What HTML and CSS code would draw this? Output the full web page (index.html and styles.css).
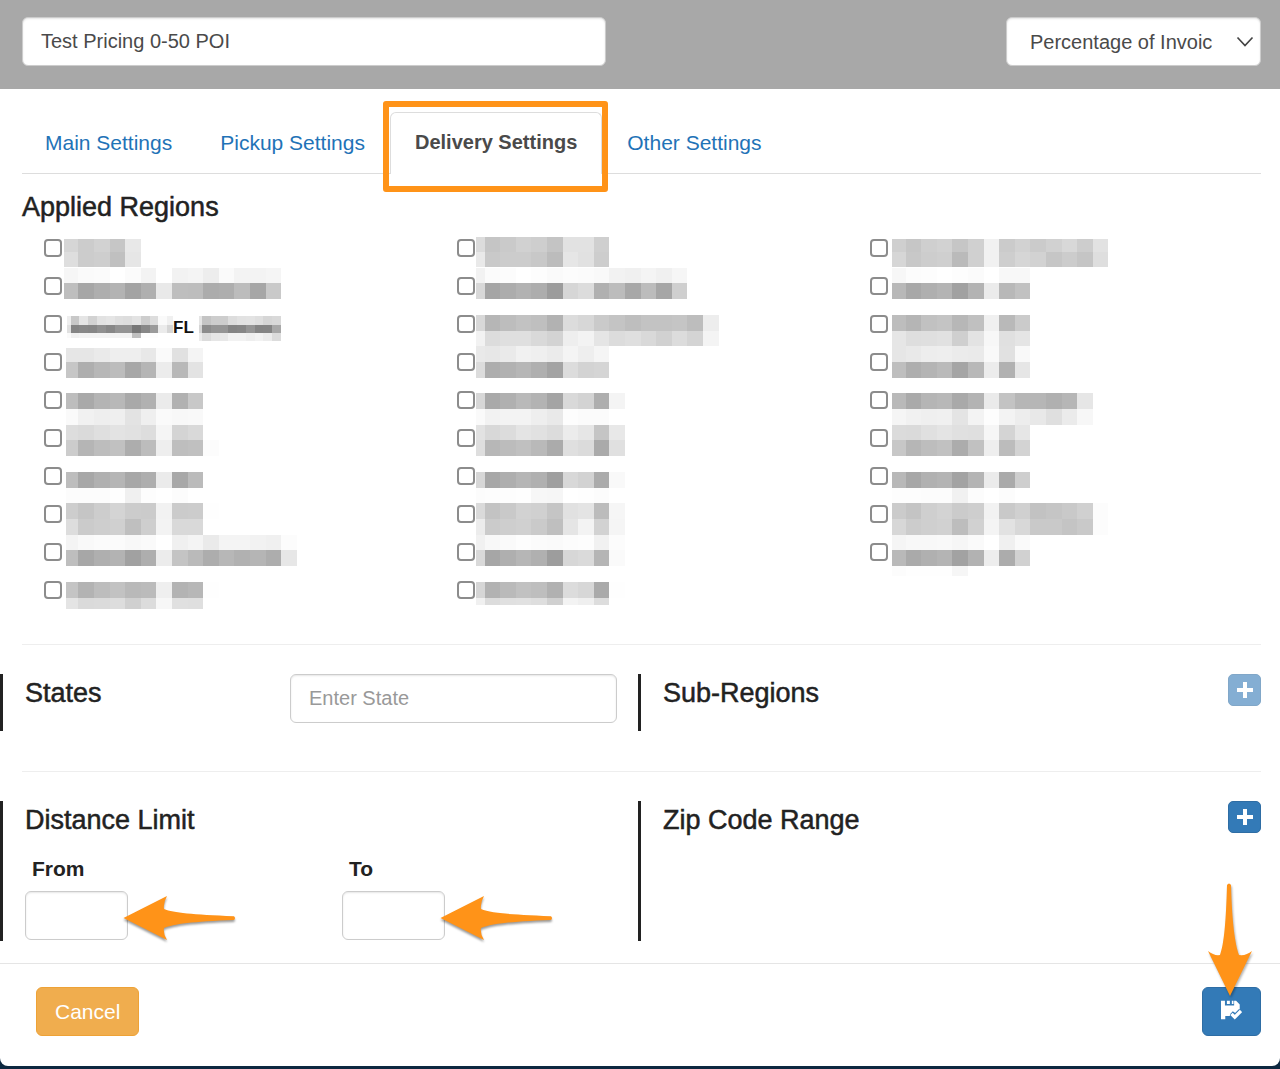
FILE: index.html
```html
<!DOCTYPE html>
<html lang="en">
<head>
<meta charset="utf-8">
<meta name="viewport" content="width=device-width, initial-scale=1">
<title>Pricing - Delivery Settings</title>
<link rel="stylesheet" href="styles.css">
</head>
<body>
<form class="sheet">
  <header class="topbar">
    <input class="field title-field" type="text" value="Test Pricing 0-50 POI" aria-label="Pricing name">
    <div class="select-wrap">
      <select class="field type-select" aria-label="Pricing type">
        <option>Percentage of Invoice</option>
      </select>
      <svg class="chevron" viewBox="0 0 18 12" aria-hidden="true"><path d="M1.5 1.5 9 9.500 16.500 1.500" fill="none" stroke="#444" stroke-width="1.700"/></svg>
    </div>
  </header>

  <nav class="tabs">
    <a class="tab" href="#main">Main Settings</a>
    <a class="tab" href="#pickup">Pickup Settings</a>
    <a class="tab active" href="#delivery" aria-current="page">Delivery Settings</a>
    <a class="tab" href="#other">Other Settings</a>
  </nav>

  <main>
    <section class="regions">
      <h2>Applied Regions</h2>
      <div class="region-columns" id="regions"></div>
    </section>

    <hr>

    <div class="panels">
      <section class="panel states">
        <h2><label for="state">States</label></h2>
        <input class="field" id="state" type="text" placeholder="Enter State">
      </section>
      <section class="panel with-action">
        <h2>Sub-Regions</h2>
        <button class="add" type="button" aria-label="Add sub-region" disabled>
          <svg viewBox="0 0 16 16" aria-hidden="true"><path d="M6 0h4v6h6v4h-6v6H6v-6H0V6h6z" fill="#fff"/></svg>
        </button>
      </section>
    </div>

    <hr class="after-panels">

    <div class="panels limits">
      <section class="panel">
        <h2>Distance Limit</h2>
        <div class="distance">
          <div class="distance-item">
            <label for="from">From</label>
            <div class="pointed">
              <input class="field" id="from" type="text">
              <svg class="arrow-left" viewBox="0 0 116 52" aria-hidden="true"><path d="M1.500 23 45 1Q41 8 42 14C52 18 70 19.500 112 21.200Q114 23 112 25C70 26.500 52 29 42 33Q41 39 45 45Z" fill="#ff9318"/></svg>
            </div>
          </div>
          <div class="distance-item">
            <label for="to">To</label>
            <div class="pointed">
              <input class="field" id="to" type="text">
              <svg class="arrow-left" viewBox="0 0 116 52" aria-hidden="true"><path d="M1.500 23 45 1Q41 8 42 14C52 18 70 19.500 112 21.200Q114 23 112 25C70 26.500 52 29 42 33Q41 39 45 45Z" fill="#ff9318"/></svg>
            </div>
          </div>
        </div>
      </section>
      <section class="panel with-action">
        <h2>Zip Code Range</h2>
        <button class="add" type="button" aria-label="Add zip code range">
          <svg viewBox="0 0 16 16" aria-hidden="true"><path d="M6 0h4v6h6v4h-6v6H6v-6H0V6h6z" fill="#fff"/></svg>
        </button>
      </section>
    </div>
  </main>

  <footer class="actions">
    <button class="cancel" type="button">Cancel</button>
    <div class="save-wrap">
      <button class="save" type="submit" aria-label="Save">
        <svg viewBox="0 0 64 60" aria-hidden="true">
          <path d="M0 2h12v14h28V2h6l11 11v15L44 40l-8-6-8 8v6H13v10H0z" fill="#fff"/>
          <path d="M18 2h9v10h-9zM33 2h5v10h-5z" fill="#fff"/>
          <path d="M32 42 42 52 61 33" fill="none" stroke="#337ab7" stroke-width="17"/>
          <path d="M32 42 42 52 61 33" fill="none" stroke="#fff" stroke-width="10"/>
        </svg>
      </button>
      <svg class="arrow-down" viewBox="0 0 52 118" aria-hidden="true"><path d="M26 114 4 69Q10 74 16 73C20 62 22 40 23 3Q25 0 27 3C28 40 31 62 35 73Q42 74 48 69Z" fill="#ff9318"/></svg>
    </div>
  </footer>
</form>
<script src="script.js"></script>
</body>
</html>
```
FILE: styles.css
```css
* { box-sizing: border-box; }

body {
  margin: 0;
  padding-bottom: 3px;
  background: #0d2840;
  color: #222;
  font: 21px/30px "Liberation Sans", Arial, sans-serif;
}

input, select, button { font: inherit; }

h2 {
  margin: 0;
  font-size: 27px;
  line-height: 30px;
  font-weight: 400;
  -webkit-text-stroke: 0.5px #222;
}

hr {
  margin: 35px 19px 29px 22px;
  border: 0;
  border-top: 1px solid #eee;
}

.after-panels { margin-top: 40px; }

.sheet {
  background: #fff;
  border-radius: 0 0 8px 8px;
}

.field {
  height: 49px;
  padding: 0 18px;
  border: 1px solid #ccc;
  border-radius: 6px;
  background: #fff;
  box-shadow: inset 0 1px 2px rgba(0, 0, 0, 0.1);
  color: #4a4a4a;
  font-size: 20px;
}

.field::placeholder { color: #999; opacity: 1; }

.topbar {
  display: flex;
  justify-content: space-between;
  gap: 22px;
  padding: 17px 19px 23px 22px;
  background: #a8a8a8;
}

.title-field { flex: 0 1 584px; min-width: 0; }

.select-wrap { position: relative; flex: 0 1 255px; }

.type-select {
  display: block;
  width: 100%;
  padding: 0 48px 0 23px;
  appearance: none;
}

.chevron {
  position: absolute;
  top: 19px;
  right: 7px;
  width: 18px;
  height: 12px;
  pointer-events: none;
}

.tabs {
  display: flex;
  gap: 2px;
  margin: 23px 19px 0 22px;
  border-bottom: 1px solid #ddd;
}

.tab {
  height: 61px;
  padding: 15px 22px;
  border: 1px solid transparent;
  border-bottom: 0;
  color: #1f73b7;
  text-decoration: none;
}

.tab.active {
  position: relative;
  height: 62px;
  margin-bottom: -1px;
  padding: 14px 24px;
  border-color: #ddd;
  border-radius: 6px 6px 0 0;
  background: #fff;
  color: #4a4a4a;
  font-size: 20px;
  font-weight: 700;
}

.tab.active::after {
  content: "";
  position: absolute;
  inset: -12px -7px -18px -8px;
  border: 6px solid #ff9318;
  border-radius: 3px;
}

.regions { padding: 18px 19px 0 22px; }

.region-columns {
  display: grid;
  grid-template-columns: repeat(3, 1fr);
  margin-top: 7px;
}

.region-list {
  margin: 0;
  padding: 0 0 0 22px;
  list-style: none;
}

.region {
  display: flex;
  align-items: center;
  gap: 2px;
  height: 38px;
}

.region input {
  flex: none;
  width: 18px;
  height: 18px;
  margin: 0;
  border: 2px solid #8c8c8c;
  border-radius: 4px;
  background: #fff;
  appearance: none;
}

.region input:checked { background: #337ab7; }

.region label {
  display: flex;
  align-items: center;
  height: 38px;
  color: #111;
  font-size: 17px;
  font-weight: 700;
}

.region span { padding-top: 7px; }

.mosaic {
  display: block;
  height: 38px;
  overflow: visible;
  shape-rendering: crispEdges;
}

.mosaic.clipped { overflow: hidden; }

.panels {
  display: grid;
  grid-template-columns: 638fr 642fr;
}

.panel {
  min-height: 57px;
  padding: 0 21px 0 22px;
  border-left: 3px solid #222;
}

.panel > h2 { padding-top: 4px; }

.states {
  display: grid;
  grid-template-columns: 265px 1fr;
  align-items: start;
}

.panel.with-action {
  display: flex;
  align-items: flex-start;
  justify-content: space-between;
  padding-right: 19px;
}

.limits .panel { min-height: 140px; }

.add {
  display: grid;
  place-items: center;
  width: 33px;
  height: 32px;
  padding: 0;
  border: 1px solid #2e6da4;
  border-radius: 5px;
  background: #337ab7;
}

.add:disabled { opacity: 0.6; }

.add svg { width: 16px; height: 16px; }

.distance {
  display: grid;
  grid-template-columns: 317fr 275fr;
  padding-top: 19px;
}

.distance-item label {
  display: block;
  padding: 0 7px 7px;
  font-weight: 700;
}

.pointed { position: relative; width: 103px; }

.pointed .field { display: block; width: 100%; }

.arrow-left {
  position: absolute;
  top: 4px;
  left: 97px;
  width: 116px;
  height: 52px;
  filter: drop-shadow(0 2px 1px rgba(0, 0, 0, 0.4));
  pointer-events: none;
}

.actions {
  display: flex;
  justify-content: space-between;
  margin-top: 22px;
  padding: 23px 19px 30px 36px;
  border-top: 1px solid #e5e5e5;
}

.cancel, .save {
  height: 49px;
  padding: 0 18px;
  border-radius: 6px;
  color: #fff;
}

.cancel { border: 1px solid #eea236; background: #f0ad4e; }

.save {
  display: block;
  padding-bottom: 3px;
  border: 1px solid #2e6da4;
  background: #337ab7;
}

.save svg { display: block; width: 21px; height: 20px; }

.save-wrap { position: relative; }

.arrow-down {
  position: absolute;
  top: -105px;
  left: 2px;
  width: 52px;
  height: 118px;
  filter: drop-shadow(1px 2px 1px rgba(0, 0, 0, 0.3));
  pointer-events: none;
}
```
FILE: script.js
```
// Redacted region names. Each band is [top, height, grey levels in hex],
// measured in thirds of a pixel from the top left of the row.
const STEP = 46.8;
const columns = [
  { start: 5, first: 43, rows: [
    { start: 0, bands: [[30,39,"d6ccd2c6e8"],[69,46,"decccec0e6"]] },
    { start: 0, bands: [[2,46,"f6fafbfffbf3fff2f4edfaf3f3f5"],[48,49,"bea6aeb3a3afe9bebdacaebca6c9"]] },
    { text: "FL" },
    { bands: [[15,42,"e6e6eaeeeee8fae1f4"],[57,47,"c6aeb7bca7b5ecb8e3"]] },
    { bands: [[36,48,"bda9b4b8a9b1ebb1c8"],[84,47,"faf1eeefe3effaf8f9"]] },
    { bands: [[18,46,"dddadfe3e1ddf5d4d9"],[64,48,"ccb5bdc1adbceebec0fc"]] },
    { bands: [[46,46,"bda7b0b5a7aeeba8bb"],[92,46,"fcfcfcfef0fdfffc"]] },
    { bands: [[24,48,"cdc5cdd4cccbf2cbccfe"],[72,48,"ddcbced0bfcef3d9d9"]] },
    { bands: [[6,46,"f4f9fbfbf8fafff0f4eaf4f4f2f0fc"],[52,48,"bea7afb3a1aeecc4baadb7b1b5ade7"]] },
    { bands: [[33,48,"c4b3bdc2b9bbefb3b7fe"],[81,32,"e4dadbddd0dcf7e0df"]] }
  ] },
  { start: -3, first: 23, rows: [
    { bands: [[24,46,"dcc5cad1cec4e2e2cf"],[70,45,"e9c9ccccc8bce6e1cd"]] },
    { bands: [[2,46,"f2fbfcfffdfafcfbf9f2f0f4f0f6"],[48,49,"d8a5acb2ad9cd6dcb0bca8bca6cf"]] },
    { bands: [[30,47,"d8b6bdc2bfb2dcd7cac4bec3c3c5bded"],[77,46,"f2dcdfdfd9d3eef3e5dcdfd9d1dcd4f4"]] },
    { bands: [[9,48,"e9e7eaf1efebf4eef5"],[57,47,"dcadb1b6afa3dcd3d5"]] },
    { bands: [[36,48,"d7a9b0b9b3a4d9d3aef4"],[84,47,"faf2f3f3eee9fdfbfb"]] },
    { bands: [[18,46,"e2d8dce4e1dcece6c5e8"],[64,48,"deb7bcc0b9abdfdbaae0"]] },
    { bands: [[46,46,"d7a7aeb5b09fd8d2abf9"],[92,46,"fcfdfdfef7f6fffefc"]] },
    { bands: [[24,48,"dac3c9d2d0c5e1e4bcf6"],[72,48,"eccbced0cabfe5f3d2f5"]] },
    { bands: [[6,46,"f1f8fafdfbfafcfdf1fc"],[52,48,"d9a6afb6b09dd7dab5fa"]] },
    { bands: [[33,48,"d6b2bac1beb1dcd7aafe"],[81,20,"f0dce0e1ded0f3efdd"]] }
  ] },
  { start: 5, first: 47, rows: [
    { bands: [[30,39,"cfc6cfd2c6d0f1cbd2cbd1d8cde2"],[69,46,"d6c8cdcfbad0f1ced6d2c6ccc5de"]] },
    { bands: [[2,46,"f7fcfdfffdfbfff8f8"],[48,49,"b8a8afb4a1b3ebb8c1"]] },
    { bands: [[30,47,"bdb5c1c4b7c0f0b9cb"],[77,46,"e6dedfe1cfe3f7e0e5"]] },
    { bands: [[9,48,"e6e9edeeebeaf9e1f9"],[57,47,"beaeb4baa5b8ecb1e6"]] },
    { bands: [[36,48,"b9aab5b8a9b3eac3b6b6b0b6e6"],[84,47,"f5f1eff0e4f3fdf3ede8dfebf7"]] },
    { bands: [[18,46,"dbdae0e4e0dff6d4e6"],[64,48,"c7b6bdc1acc1eebcd3"]] },
    { bands: [[46,46,"b8a7b1b4a3b4ebaace"],[92,46,"fdfdfcfcf1fcfffc"]] },
    { bands: [[24,48,"cbc4cfd3cbcef2c9d0c2c5c9d0fc"],[72,48,"d7cccfd1bdd1f4e2d8c9c9c4c9fc"]] },
    { bands: [[6,46,"f5f8f8f9f6fafff0fa"],[52,48,"b9aab0b4a2b2edacd1"],[100,30,"fcfefefef6"]] }
  ] }
];

const before = [[33,27,"eec8e5d2e2e5dfdde3cdddfaf0"],[60,24,"e08488869087949477879bebd6"],[84,14,"faf0f3f3f3f3f3f3c0fdfd"]];
const after = [[33,27,"e5c4cdcddde2e3dfd6d9"],[60,24,"d58c95958486958485a8"],[84,24,"ecdce6e8f2f2eef2ecdc"]];

function mosaic(bands, start, first, step, width, extra = "") {
  let rects = "";
  for (const [top, height, levels] of bands) {
    levels.match(/../g).forEach((level, i) => {
      const x = i ? first + (i - 1) * step : start;
      const w = i ? step : first - start;
      rects += `<rect x="${x}" y="${top}" width="${w}" height="${height}" fill="#${level.repeat(3)}"/>`;
    });
  }
  return `<svg class="mosaic ${extra}" width="${width}" height="38" viewBox="0 0 ${width * 3} 114" aria-hidden="true">${rects}</svg>`;
}

let n = 0;
document.getElementById("regions").innerHTML = columns.map(col =>
  `<ul class="region-list">${col.rows.map(row => {
    n += 1;
    const body = row.text
      ? mosaic(before, 8, 20, 26.3, 109, "clipped") + `<span>${row.text}</span>` + mosaic(after, 16, 24, 26.3, 100)
      : mosaic(row.bands, row.start ?? col.start, col.first, STEP, 250);
    return `<li class="region"><input type="checkbox" id="region-${n}" aria-label="Region ${n}"><label for="region-${n}">${body}</label></li>`;
  }).join("")}</ul>`
).join("");
```
